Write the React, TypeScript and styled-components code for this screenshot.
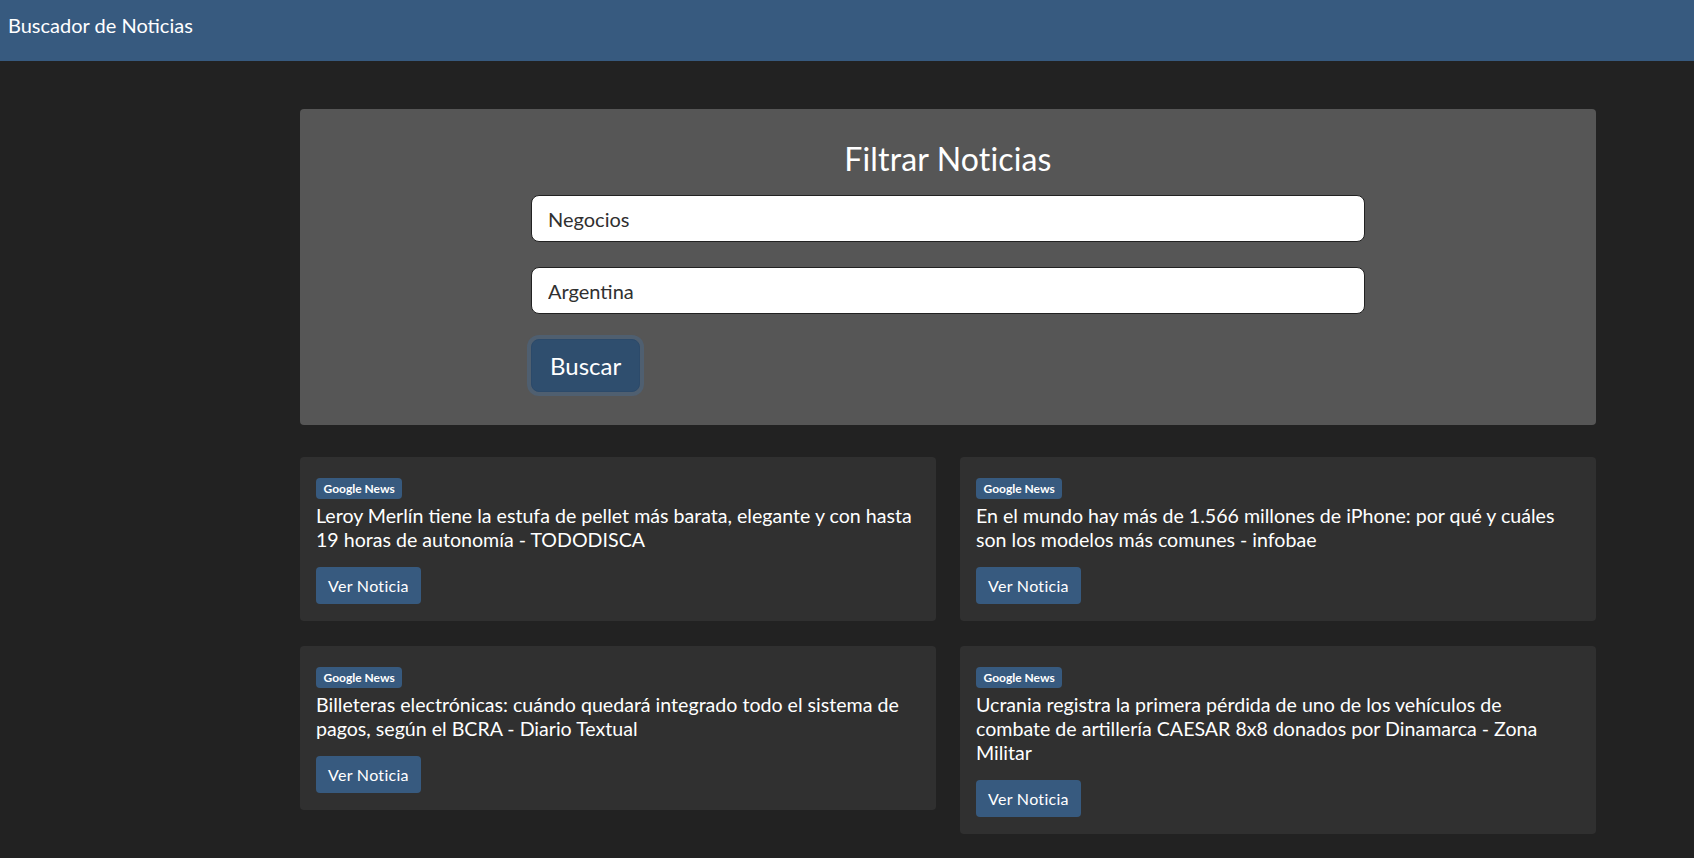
import React from "react";
import styled, { createGlobalStyle } from "styled-components";

const GlobalStyle = createGlobalStyle`
  * { box-sizing: border-box; }
  html, body { margin: 0; padding: 0; }
  body {
    background: #222222;
    font-family: Lato, "Liberation Sans", sans-serif;
    color: #ffffff;
  }
`;

const NavBar = styled.header`
  height: 61px;
  background: #375a7f;
  display: flex;
  align-items: flex-start;
  padding: 10px 8px 0;
`;

const Brand = styled.span`
  font-size: 20px;
  line-height: 30px;
  color: #ffffff;
`;

const Main = styled.main`
  width: 1296px;
  margin: 48px 0 0 300px;
  display: flex;
  flex-direction: column;
  gap: 32px;
`;

const FilterPanel = styled.section`
  background: #565656;
  border-radius: 4px;
  padding: 31px 0 33px;
  display: flex;
  flex-direction: column;
  align-items: center;
`;

const Title = styled.h1`
  margin: 0 0 17px;
  font-size: 32px;
  font-weight: 400;
  line-height: 38.4px;
  color: #ffffff;
  letter-spacing: 0.15px;
`;

const Form = styled.form`
  width: 834px;
  display: flex;
  flex-direction: column;
  align-items: flex-start;
  gap: 25px;
`;

const Field = styled.input`
  width: 100%;
  height: 47px;
  border: 1px solid #222222;
  border-radius: 8px;
  background: #ffffff;
  padding: 0 16px;
  font-family: Lato, "Liberation Sans", sans-serif;
  font-size: 20px;
  color: #303030;
  outline: none;
`;

const SearchButton = styled.button`
  height: 53px;
  padding: 0 18px;
  border: 1px solid #2c4a6a;
  border-radius: 8px;
  background: #2f4e6e;
  box-shadow: 0 0 0 4px #4f5f70;
  color: #ffffff;
  font-family: Lato, "Liberation Sans", sans-serif;
  font-size: 24px;
  cursor: pointer;
`;

const NewsGrid = styled.div`
  display: grid;
  grid-template-columns: 1fr 1fr;
  column-gap: 24px;
  row-gap: 25px;
  align-items: start;
`;

const Card = styled.article`
  background: #303030;
  border-radius: 4px;
  padding: 21px 16px 17px;
  display: flex;
  flex-direction: column;
  align-items: flex-start;
`;

const Badge = styled.span`
  display: inline-flex;
  align-items: center;
  height: 21px;
  padding: 0 7.5px;
  border-radius: 4px;
  background: #375a7f;
  color: #ffffff;
  font-size: 12px;
  font-weight: 700;
`;

const NewsTitle = styled.h5`
  margin: 5px 0 15px;
  font-size: 19.6px;
  font-weight: 400;
  line-height: 24px;
  color: #ffffff;
`;

const LinkButton = styled.a`
  display: inline-flex;
  align-items: center;
  height: 37px;
  padding: 0 12px;
  border-radius: 4px;
  background: #375a7f;
  color: #ffffff;
  font-size: 16px;
  letter-spacing: 0.3px;
  text-decoration: none;
`;

const news = [
  "Leroy Merlín tiene la estufa de pellet más barata, elegante y con hasta 19 horas de autonomía - TODODISCA",
  "En el mundo hay más de 1.566 millones de iPhone: por qué y cuáles son los modelos más comunes - infobae",
  "Billeteras electrónicas: cuándo quedará integrado todo el sistema de pagos, según el BCRA - Diario Textual",
  "Ucrania registra la primera pérdida de uno de los vehículos de combate de artillería CAESAR 8x8 donados por Dinamarca - Zona Militar",
];

export default function App() {
  return (
    <>
      <GlobalStyle />
      <NavBar>
        <Brand>Buscador de Noticias</Brand>
      </NavBar>
      <Main>
        <FilterPanel>
          <Title>Filtrar Noticias</Title>
          <Form onSubmit={(e) => e.preventDefault()}>
            <Field defaultValue="Negocios" />
            <Field defaultValue="Argentina" />
            <SearchButton type="submit">Buscar</SearchButton>
          </Form>
        </FilterPanel>
        <NewsGrid>
          {news.map((t) => (
            <Card key={t}>
              <Badge>Google News</Badge>
              <NewsTitle>{t}</NewsTitle>
              <LinkButton href="#">Ver Noticia</LinkButton>
            </Card>
          ))}
        </NewsGrid>
      </Main>
    </>
  );
}
